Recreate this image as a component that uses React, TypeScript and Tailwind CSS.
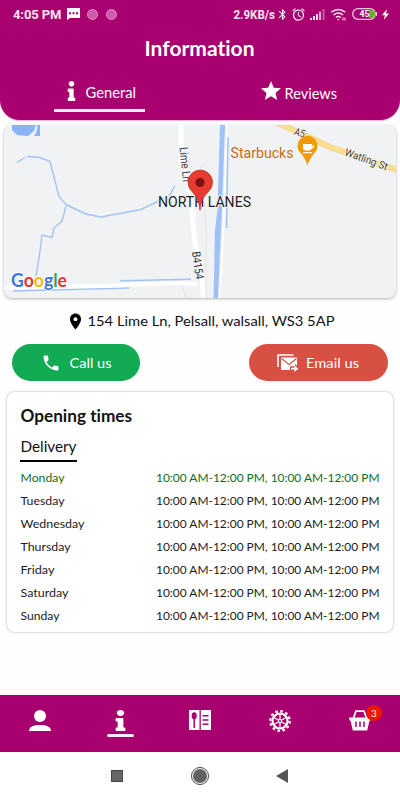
import type { ReactNode } from 'react';
import { FaInfo } from 'react-icons/fa';
import { MdStar, MdLocationOn, MdPhone, MdBluetooth, MdAlarm } from 'react-icons/md';

const HOURS = '10:00 AM-12:00 PM, 10:00 AM-12:00 PM';
const days = ['Monday', 'Tuesday', 'Wednesday', 'Thursday', 'Friday', 'Saturday', 'Sunday'];
const dayWidths = [44, 44, 64, 50, 34, 48, 39];

// svg text pinned to a fixed run length so labels stay on their spot
function Label({ x, y, w, size, children, fill = '#fff', weight = 400, font = 'Lato', transform }: { x: number; y: number; w: number; size: number; children: ReactNode; fill?: string; weight?: number; font?: string; transform?: string }) {
  return <text className="[font-variant-ligatures:none]" x={x} y={y} textLength={w} lengthAdjust="spacingAndGlyphs" fontSize={size} fill={fill} fontWeight={weight} fontFamily={`${font}, sans-serif`} transform={transform}>{children}</text>;
}

function StatusBar() {
  return (
    <div className="flex h-7 items-center pl-[13px] pr-[11px] font-[Roboto,sans-serif] text-[#fbe3f3]">
      <span className="w-[49px] whitespace-nowrap text-[13px] font-bold leading-none tracking-[-0.1px]">4:05 PM</span>
      <svg className="ml-[5px]" width="13" height="12" viewBox="0 0 13 12"><path d="M0 0h13v10H3L0 12z" fill="#fff" /><path d="M2 4.2h2v2H2zM5.5 4.2h2v2h-2zM9 4.2h2v2H9z" fill="#a9006f" /></svg>
      <span className="ml-[7px] size-[11px] rounded-full border border-[#e08cc4] bg-[#cf5bac]" />
      <span className="ml-2 size-[11px] rounded-full border border-[#e08cc4] bg-[#cf5bac]" />
      <svg className="ml-auto" width="43" height="16" viewBox="0 0 43 16"><Label x={0.500} y={12.500} w={41.500} size={12} weight={700} font="Roboto" fill="#fbe3f3">2.9KB/s</Label></svg>
      <MdBluetooth size={13} />
      <MdAlarm className="ml-[2px]" size={15} />
      <svg className="ml-[4px]" width="15" height="12" viewBox="0 0 15 12">
        <path d="M0 10h2v2H0zM3 8h2v4H3zM6 6h2v6H6z" fill="currentColor" />
        <path d="M9 3.500h2V12H9z" fill="#e9a9d3" />
        <path d="M12.500 1h2v11h-2z" fill="#cb5aa6" />
      </svg>
      <svg className="ml-[5px]" width="17" height="13" viewBox="0 0 16 13" fill="none" stroke="currentColor" strokeWidth="1.500">
        <path d="M.8 4.200q7-5.600 14 0M3 7q4.800-3.800 9.600 0M5.300 9.500q2.500-2 5 0" /><path d="m6.300 11 1.500 1.500L9.300 11z" fill="currentColor" stroke="none" /><path d="M12.500 9.500v3M14.500 9.500v3" strokeWidth="1" />
      </svg>
      <svg className="ml-[5px]" width="26" height="12" viewBox="0 0 26 12">
        <rect x=".7" y=".7" width="22.600" height="10.600" rx="5.300" fill="none" stroke="#f3c6e3" strokeWidth="1.300" />
        <path d="M17 2h2a4 4 0 0 1 0 8h-2z" fill="#5cb82b" />
        <path d="M24.500 4v4" stroke="#f3c6e3" />
        <Label x={7.500} y={9} w={10} size={8.500} weight={700} font="Roboto">45</Label>
      </svg>
      <svg className="ml-[4px]" width="7" height="11" viewBox="0 0 7 11"><path d="M5 0 0 6.300h3L1.800 11 7 4.500H4z" fill="#fff" /></svg>
    </div>
  );
}

function Header() {
  return (
    <header className="h-[120px] rounded-b-[20px] bg-[#a9006f] text-white shadow-[0_1px_0_#f5b3df]">
      <StatusBar />
      <h1 className="flex h-[42px] items-center justify-center">
        <svg width="112" height="26" viewBox="0 0 112 26"><Label x={0.500} y={20} w={110} size={20} weight={700}>Information</Label></svg>
      </h1>
      <div className="flex">
        <div className="ml-[54px] flex h-[42px] w-[91px] items-center border-b-[3px] border-[#fff0fa] pt-[9px] pl-3">
          <FaInfo className="-mt-[7px] w-[11px]" size={20} />
          <svg className="-mt-[3px] ml-2" width="53" height="22" viewBox="0 0 53 22"><Label x={0.500} y={15.500} w={50.500} size={14.500}>General</Label></svg>
        </div>
        <div className="ml-[114px] flex h-[42px] items-center pt-[5px]">
          <MdStar className="-mt-[6px]" size={24} />
          <svg className="ml-px" width="55" height="22" viewBox="0 0 55 22"><Label x={0.500} y={15.500} w={52.500} size={14.500}>Reviews</Label></svg>
        </div>
      </div>
    </header>
  );
}

function MapView() {
  return (
    <div className="mx-1 mt-[5px] h-[173px] overflow-hidden rounded-lg bg-[#f0f2f4] shadow-[0_1px_3px_rgba(0,0,0,0.3)]">
      <svg width="392" height="173" viewBox="4 125 392 173" fill="none">
        {/* water */}
        <path d="M12 125v5l5 5 11 1 6-5 2-6zM37 125h3v11h-6q4-5 3-11" fill="#8ab4f8" />
        <g stroke="#a4c3f5" strokeWidth="1.400">
          <path d="m17 162.500 8-5M27 156.500l13 1 10 4 9 35 7 8q10 5 20 9.500l15 3 40-7.500 19-9 10-6 5-9M66 206l-4 15-8 7-2 9.500-10-2.500-2 16-4 25" />
          <path d="m120 280.800 71-1.500M13 291l116-3" />
        </g>
        <path d="M220 125h5l-3 85-1 20-3 68h-4.500l1.500-68 2.500-20z" fill="#9fc1fa" />
        <path d="m227 125-3 92-4 81" stroke="#fff" strokeWidth="1.500" />
        <path d="m228 137-1.500 91" stroke="#9fc1fa" strokeWidth="1.500" />
        {/* roads */}
        <path d="m4 287.500 100-1.500 70-3 23 1" stroke="#fff" strokeWidth="4" />
        <path d="M181 125v38q2 13 8 24l3 23 3 35q7 20 8.500 53" stroke="#fff" strokeWidth="5" />
        <path d="M200 168l9-7M204 200q3 25 2 45v53M182 285l4 13" stroke="#e3e5e7" />
        <path d="m276 122 54 25 70 24" stroke="#f3d27c" strokeWidth="6" />
        <path d="m276 122 54 25 70 24" stroke="#fbdf91" strokeWidth="4.500" />
        {/* labels */}
        <g stroke="#f4f5f6" strokeWidth="2" paintOrder="stroke">
          <Label x={0} y={0} w={35} size={11.500} fill="#444" font="Roboto" transform="translate(179.500 147.500) rotate(84)">Lime Ln</Label>
          <Label x={0} y={0} w={28} size={11.500} fill="#333" font="Roboto" transform="translate(192 252) rotate(82)">B4154</Label>
          <Label x={0} y={0} w={11} size={10.500} fill="#4e3b24" font="Roboto" transform="translate(293.500 134.500) rotate(18)">A5</Label>
          <Label x={0} y={0} w={45} size={10.500} fill="#4e3b24" font="Roboto" transform="translate(344 155) rotate(20)">Watling St</Label>
          <Label x={230.500} y={158} w={63} size={14.500} fill="#c66b12" font="Roboto">Starbucks</Label>
          <Label x={158} y={207} w={93} size={14} fill="#222" font="Roboto">NORTH LANES</Label>
        </g>
        <path d="M307.500 166q-1.500-7-7-13a10 10 0 1 1 14 0q-5.500 6-7 13" fill="#f39a0b" />
        <path d="M303 144h9v1h2q1 3-2 3.500-1 2-3 2h-3q-3 0-3-3zM303 152h9v1.300h-9z" fill="#fff" />
        <path d="M312 145.500h1q0 1.500-1 2" stroke="#f39a0b" strokeWidth=".6" />
        <path d="M200 210.500c-1-10-3-13-8-19a12.300 12.300 0 1 1 16.500 0c-5.500 6-7.500 9-8.500 19" fill="#e63b30" stroke="#c0302a" strokeWidth=".7" />
        <circle cx="200" cy="182.500" r="4.500" fill="#7d1010" />
        <text x="11" y="286.500" fontSize="19" fontFamily="Lato, sans-serif" fontWeight="700" textLength="56" lengthAdjust="spacingAndGlyphs" stroke="#fff" strokeWidth="1.500" paintOrder="stroke">
          <tspan fill="#3b78d8">G</tspan><tspan fill="#e0382e">o</tspan><tspan fill="#f2b90c">o</tspan><tspan fill="#3b78d8">g</tspan><tspan fill="#33a152">l</tspan><tspan fill="#e0382e">e</tspan>
        </text>
      </svg>
    </div>
  );
}

function MailIcon() {
  return (
    <svg width="22" height="18" viewBox="0 0 22 18">
      <path d="M1 13V1h15.500" fill="none" stroke="#fff" strokeWidth="1.600" />
      <path d="M4 3.500h16v8.200l-2-1.700v2.300h-5V16H4z" fill="#fff" />
      <path d="m4.500 4.500 7.500 6 7.500-6" fill="none" stroke="#d85043" strokeWidth="1.200" />
      <path d="M14 13.800h3.500v-2.300l3.800 3.200-3.800 3.200v-2.300H14z" fill="#fff" />
    </svg>
  );
}

function OpeningTimes() {
  return (
    <section className="mx-[7px] mt-[11px] h-[240px] rounded-lg bg-white px-[13px] pt-[11px] shadow-[0_0_3px_rgba(0,0,0,0.32)]">
      <svg className="block" width="130" height="26" viewBox="0 0 130 26"><Label x={0.500} y={18.500} w={111.500} size={16.500} weight={700} fill="#111">Opening times</Label></svg>
      <div className="mt-[6px] h-[27px] w-[57px] border-b-2 border-black">
        <svg className="block" width="58" height="24" viewBox="0 0 58 24"><Label x={0.500} y={17} w={56} size={15} fill="#111">Delivery</Label></svg>
      </div>
      <ul className="mt-1">
        {days.map((day, i) => (
          <li key={day} className={`flex h-[23px] items-center justify-between ${i === 0 ? 'text-[#126b1c]' : 'text-[#1c1c1c]'}`}>
            <svg width="70" height="20" viewBox="0 0 70 20"><Label x={0.500} y={14.300} w={dayWidths[i]} size={12} fill="currentColor">{day}</Label></svg>
            <svg className="-mr-1" width="230" height="20" viewBox="0 0 230 20"><Label x={2} y={14.300} w={223.500} size={12} fill="currentColor">{HOURS}</Label></svg>
          </li>
        ))}
      </ul>
    </section>
  );
}

function GearIcon() {
  return (
    <svg width="22" height="22" viewBox="-11 -11 22 22" fill="none" stroke="#fff">
      <circle r="7.500" strokeWidth="2.200" />
      <circle r="9.700" strokeWidth="2.400" strokeDasharray="2.600 2.479" />
      {[0, 60, 120].map(a => <path key={a} d="M0-7V7" strokeWidth="1.300" transform={`rotate(${a})`} />)}
      <circle r="2.100" fill="#fff" stroke="none" />
      <circle r="1" fill="#a9006f" stroke="none" />
    </svg>
  );
}

function BottomNav() {
  return (
    <nav className="grid h-[57px] grid-cols-5 bg-[#a9006f] text-white">
      <div className="flex justify-center pt-[15px]">
        <svg width="22" height="21" viewBox="0 0 22 21"><circle cx="11" cy="6" r="6" fill="#fff" /><path d="M0 21v-1q1-5 11-5t11 5v1z" fill="#fff" /></svg>
      </div>
      <div className="flex flex-col items-center pt-[15px]">
        {/* slightly stretched so the serif arms read wide */}
        <FaInfo className="scale-x-125" size={21} />
        <span className="mt-[3px] h-[3px] w-[27px] rounded-full bg-[#ffe9f7]" />
      </div>
      <div className="flex justify-center pt-[15px]">
        <svg width="22" height="20" viewBox="0 0 22 20">
          <path d="M0 0h10.500v20H0zM11.800 0H22v20H11.800z" fill="#fff" />
          <ellipse cx="5.200" cy="5.800" rx="2.600" ry="3.500" fill="#a9006f" />
          <path d="M5.200 7v11M13.500 5.700h6M13.500 10h6M13.500 14.300h6" stroke="#a9006f" strokeWidth="1.500" />
        </svg>
      </div>
      <div className="flex justify-center pt-[15px]"><GearIcon /></div>
      <div className="relative flex justify-center pt-[15px]">
        <svg width="22" height="21" viewBox="0 0 22 21">
          <path d="m4.500 8 2.500-6.800h8L17.500 8" fill="none" stroke="#fff" strokeWidth="1.700" />
          <path d="M0 7.500h22l-.5 3H20.500L18.200 20.500H3.800L1.500 10.500H.5z" fill="#fff" />
          <path d="M7 11.500v5.500M11 11.500v5.500M15 11.500v5.500" stroke="#a9006f" strokeWidth="1.500" />
        </svg>
        <span className="absolute left-[46px] top-[10px] flex size-4 items-center justify-center rounded-full bg-[#ed1600] font-[Lato,sans-serif] text-[10px] leading-none">3</span>
      </div>
    </nav>
  );
}

export default function App() {
  return (
    <div className="flex h-[800px] w-[400px] flex-col overflow-hidden bg-[#fefefe] font-[Lato,sans-serif]">
      <Header />
      <MapView />
      <div className="mt-[13px] flex h-5 items-center pl-[66px]">
        <MdLocationOn size={19} />
        <svg className="ml-[2px]" width="250" height="20" viewBox="0 0 250 20"><Label x={0.500} y={14.500} w={247} size={14} fill="#111">154 Lime Ln, Pelsall, walsall, WS3 5AP</Label></svg>
      </div>
      <div className="mt-[13px] flex justify-between px-3">
        <button className="flex h-[37px] w-32 items-center rounded-full bg-[#12aa52] pl-[29px] text-white">
          <MdPhone size={20} />
          <svg className="ml-2" width="44" height="20" viewBox="0 0 44 20"><Label x={0.500} y={14.500} w={42} size={14}>Call us</Label></svg>
        </button>
        <button className="flex h-[37px] w-[139px] items-center rounded-full bg-[#d85043] pl-7 text-white">
          <MailIcon />
          <svg className="ml-[7px]" width="56" height="20" viewBox="0 0 56 20"><Label x={0} y={14.500} w={53} size={14}>Email us</Label></svg>
        </button>
      </div>
      <OpeningTimes />
      <div className="flex-1" />
      <BottomNav />
      <div className="flex h-12 items-center bg-white pl-[111px]">
        <span className="size-3 border border-[#484848] bg-[#666]" />
        <span className="ml-[68px] flex size-[18px] items-center justify-center rounded-full border border-[#444]"><span className="size-[14px] rounded-full bg-[#626262]" /></span>
        <svg className="ml-[67px]" width="12" height="14" viewBox="0 0 12 14"><path d="M12 0v14L0 7z" fill="#555" /></svg>
      </div>
    </div>
  );
}
